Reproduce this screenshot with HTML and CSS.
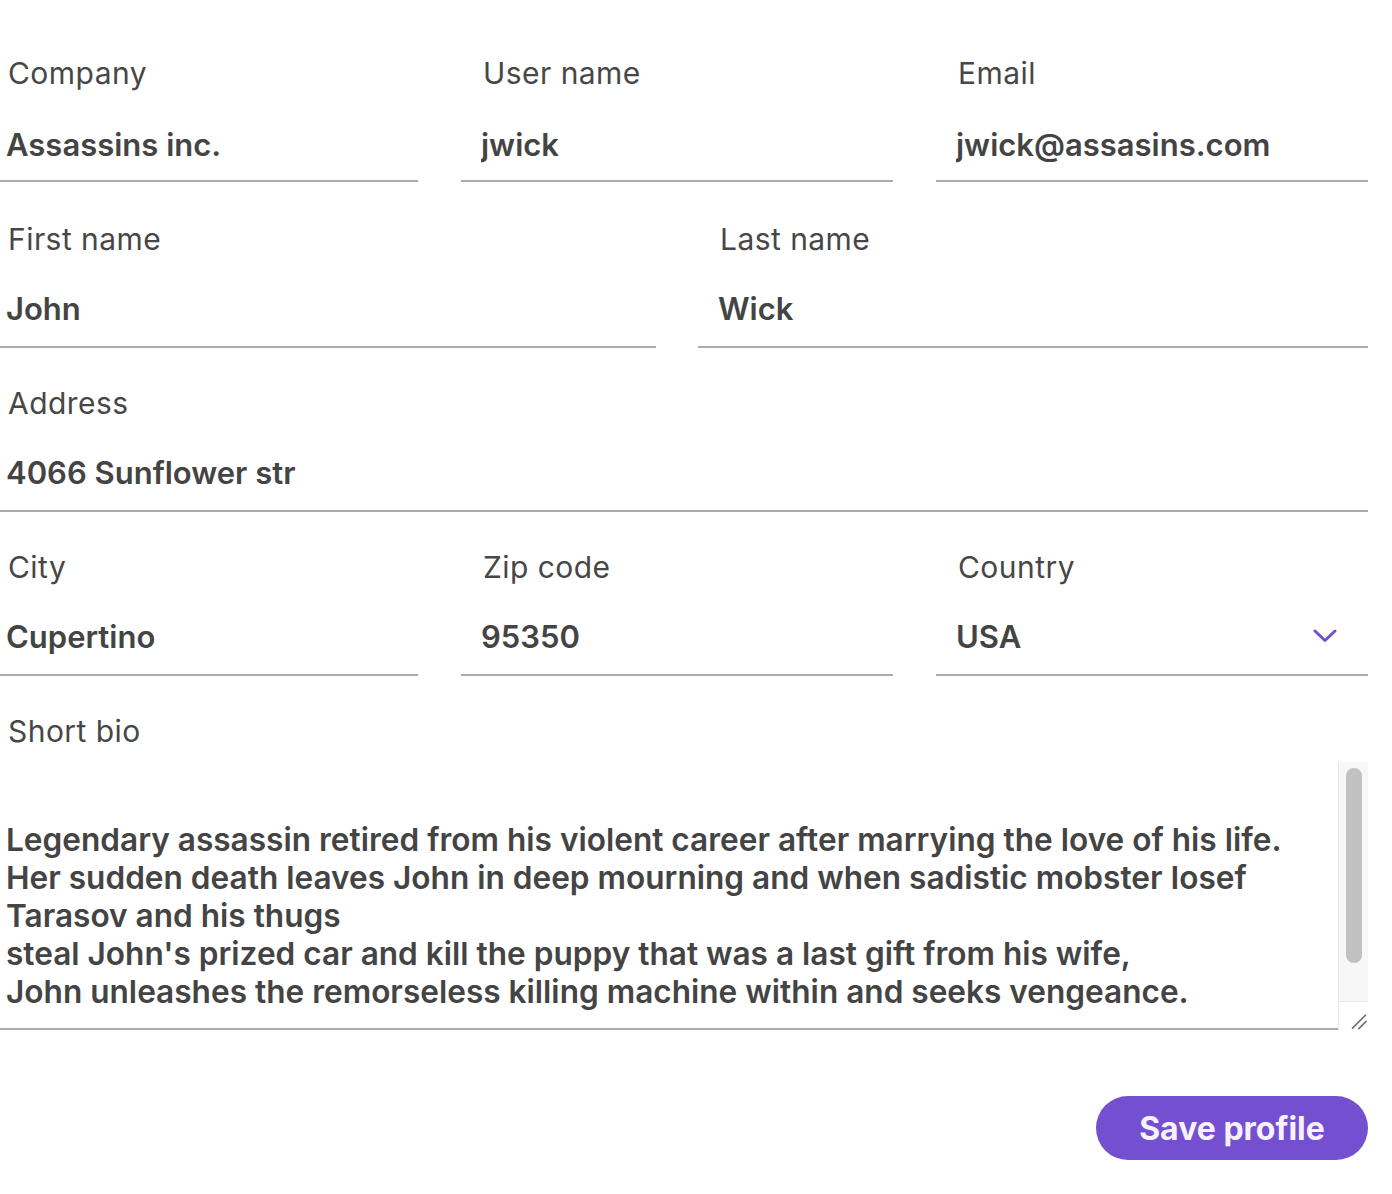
FILE: index.html
```html
<!DOCTYPE html>
<html lang="en">
<head>
<meta charset="utf-8">
<title>Profile</title>
<link rel="stylesheet" href="styles.css">
</head>
<body>
<form class="profile">
  <div class="row row-3 first-row">
    <label class="field">
      <span class="label">Company</span>
      <input class="input" type="text" value="Assassins inc.">
    </label>
    <label class="field">
      <span class="label">User name</span>
      <input class="input" type="text" value="jwick">
    </label>
    <label class="field">
      <span class="label">Email</span>
      <input class="input" type="text" value="jwick@assasins.com">
    </label>
  </div>
  <div class="row row-2">
    <label class="field">
      <span class="label">First name</span>
      <input class="input" type="text" value="John">
    </label>
    <label class="field">
      <span class="label">Last name</span>
      <input class="input" type="text" value="Wick">
    </label>
  </div>
  <div class="row row-1">
    <label class="field">
      <span class="label">Address</span>
      <input class="input" type="text" value="4066 Sunflower str">
    </label>
  </div>
  <div class="row row-3">
    <label class="field">
      <span class="label">City</span>
      <input class="input" type="text" value="Cupertino">
    </label>
    <label class="field">
      <span class="label">Zip code</span>
      <input class="input" type="text" value="95350">
    </label>
    <label class="field">
      <span class="label">Country</span>
      <span class="select-wrap">
        <select class="select">
          <option>USA</option>
          <option>Canada</option>
        </select>
        <svg class="chevron" width="24" height="14" viewBox="0 0 24 14" aria-hidden="true">
          <path d="M2 2 L12 11.5 L22 2" fill="none" stroke="#7150d2" stroke-width="3" stroke-linecap="round" stroke-linejoin="round"/>
        </svg>
      </span>
    </label>
  </div>
  <div class="field bio">
    <label class="label" for="bio">Short bio</label>
    <div class="bio-box">
      <textarea id="bio" class="textarea">Legendary assassin retired from his violent career after marrying the love of his life.
Her sudden death leaves John in deep mourning and when sadistic mobster Iosef
Tarasov and his thugs
steal John's prized car and kill the puppy that was a last gift from his wife,
John unleashes the remorseless killing machine within and seeks vengeance.</textarea>
      <div class="scrollbar" aria-hidden="true">
        <div class="track"><div class="thumb"></div></div>
        <div class="corner">
          <svg width="30" height="29" viewBox="0 0 30 29">
            <path d="M14 26.5 L27.5 13" stroke="#6a6a6a" stroke-width="1.6" stroke-linecap="round"/>
            <path d="M20.5 27 L28 19.5" stroke="#6a6a6a" stroke-width="1.6" stroke-linecap="round"/>
          </svg>
        </div>
      </div>
    </div>
  </div>
  <div class="actions">
    <button class="save" type="button">Save profile</button>
  </div>
</form>
</body>
</html>
```

FILE: styles.css
```css
* { box-sizing: border-box; }

html, body {
  margin: 0;
  padding: 0;
  background: #ffffff;
}

body {
  font-family: Inter, "Noto Sans", "Liberation Sans", sans-serif;
  color: #444444;
}

.profile {
  width: 1368px;
  padding-top: 53px;
  display: flex;
  flex-direction: column;
}

.row {
  display: grid;
}

.row-3 {
  grid-template-columns: 418px 432px 432px;
  column-gap: 43px;
}

.row-2 {
  grid-template-columns: 656px 670px;
  column-gap: 42px;
}

.row-1 {
  grid-template-columns: 1fr;
}

.field {
  display: flex;
  flex-direction: column;
  margin-bottom: 35px;
}

.first-row .field {
  margin-bottom: 37px;
}

.label {
  display: block;
  height: 40px;
  line-height: 40px;
  font-size: 30px;
  font-weight: 400;
  color: #474747;
  padding-left: 22px;
  letter-spacing: 0.45px;
}

.input,
.select {
  display: block;
  width: 100%;
  height: 72px;
  margin-top: 17px;
  border: 0;
  border-bottom: 2px solid #ababab;
  border-radius: 0;
  background: transparent;
  font-family: inherit;
  font-size: 31px;
  font-weight: 600;
  color: #444444;
  padding: 0 0 5px 20px;
  outline: none;
}

.first-row .input {
  padding-bottom: 1px;
}

.row .field:first-child .label,
.bio .label { padding-left: 8px; }
.row .field:first-child .input { padding-left: 6px; }

.select-wrap {
  display: flex;
  align-items: center;
  position: relative;
}

.select {
  -webkit-appearance: none;
  appearance: none;
  padding-right: 60px;
}

.chevron {
  position: absolute;
  right: 31px;
  top: 42px;
}

.bio {
  margin-bottom: 0;
}

.bio-box {
  display: flex;
  margin-top: 11px;
}

.textarea {
  display: block;
  flex: 1;
  height: 268px;
  border: 0;
  border-bottom: 2px solid #ababab;
  border-radius: 0;
  outline: none;
  resize: none;
  overflow: hidden;
  white-space: pre;
  font-family: inherit;
  font-size: 31.6px;
  font-weight: 600;
  line-height: 38px;
  color: #444444;
  padding: 59px 0 0 6px;
  background: transparent;
}

.scrollbar {
  width: 30px;
  height: 269px;
  display: flex;
  flex-direction: column;
}

.track {
  flex: 0 0 239px;
  background: #f7f7f7;
  border-left: 1px solid #e8e8e8;
  padding: 6px 6px 0 7px;
}

.thumb {
  height: 195px;
  border-radius: 8px;
  background: #c1c1c1;
}

.corner {
  flex: 1;
  background: #ffffff;
  border-top: 1px solid #e8e8e8;
  border-left: 1px solid #e8e8e8;
  display: flex;
  justify-content: flex-end;
  align-items: flex-end;
}

.corner svg {
  display: block;
}

.actions {
  display: flex;
  justify-content: flex-end;
  margin-top: 65px;
}

.save {
  width: 272px;
  height: 64px;
  border: 0;
  border-radius: 32px;
  background: #744fcf;
  color: #f6f2ff;
  font-family: inherit;
  font-size: 32px;
  font-weight: 700;
  padding: 0;
  cursor: pointer;
}
```
